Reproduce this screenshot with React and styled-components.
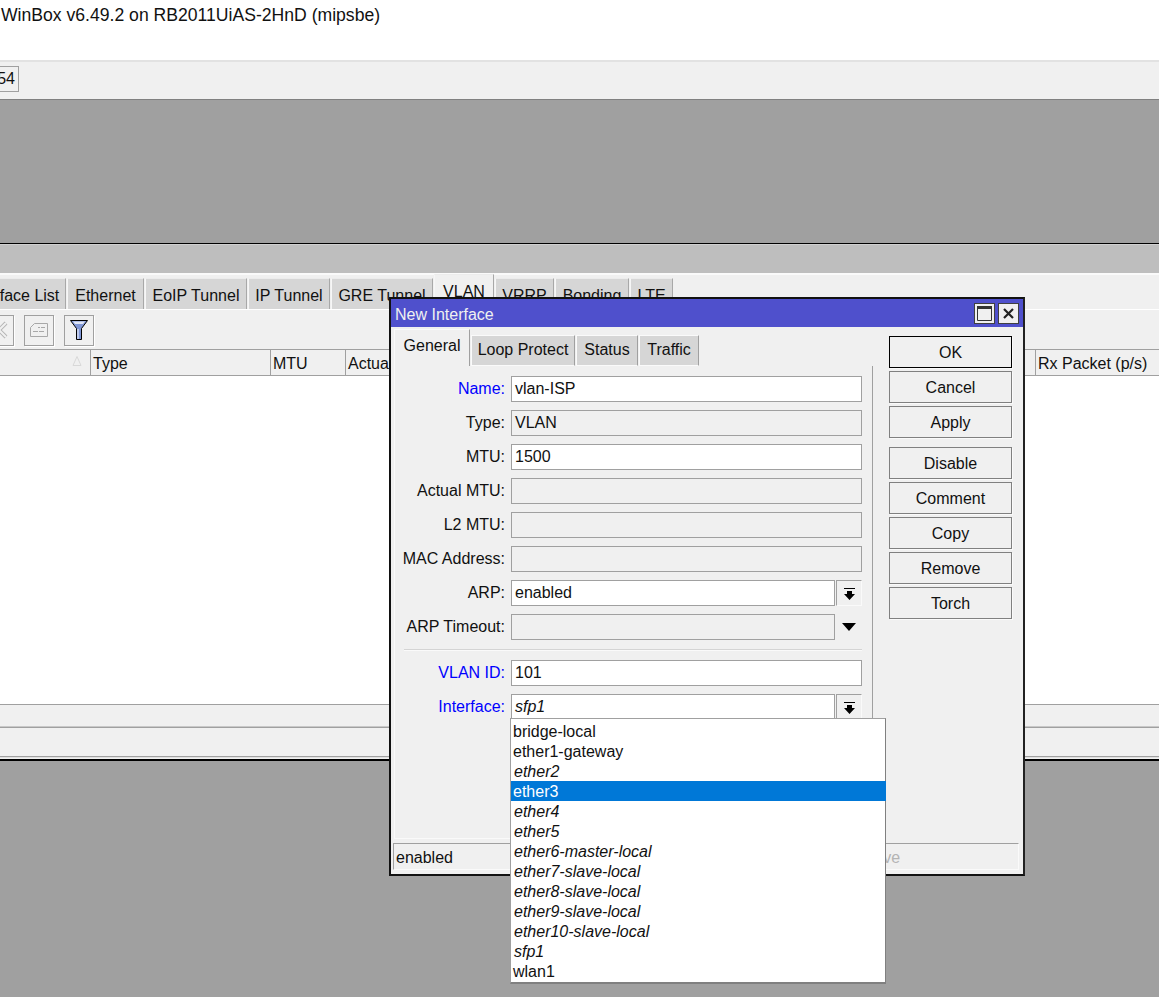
import React from 'react'
import styled, { createGlobalStyle } from 'styled-components'

const GlobalStyle = createGlobalStyle`
  html, body {
    margin: 0;
    padding: 0;
    background: #a0a0a0;
  }
  * {
    box-sizing: border-box;
  }
`

const Page = styled.div`
  position: relative;
  width: 1159px;
  height: 997px;
  overflow: hidden;
  display: flex;
  flex-direction: column;
  background: #a0a0a0;
  font-family: 'Liberation Sans', Arial, sans-serif;
  font-size: 16px;
  color: #111;
`

const AppTitle = styled.div`
  height: 62px;
  flex: none;
  padding: 5px 0 0 1px;
  background: #fff;
  font-size: 17.6px;
  line-height: 20px;
  white-space: nowrap;
  border-bottom: 2px solid #e2e2e2;
`

const TopBar = styled.div`
  height: 38px;
  flex: none;
  display: flex;
  align-items: flex-start;
  padding-top: 4px;
  background: #f0f0f0;
  border-bottom: 1px solid #808080;
`

const UptimeBox = styled.div`
  width: 19px;
  height: 26px;
  display: flex;
  align-items: center;
  justify-content: flex-end;
  padding-right: 3px;
  border: 1px solid #a0a0a0;
  border-left: none;
`

const Desktop = styled.div`
  height: 143px;
  flex: none;
  background: #a0a0a0;
`

const MainWindow = styled.div`
  height: 518px;
  flex: none;
  display: flex;
  flex-direction: column;
  background: #f0f0f0;
  border-top: 1px solid #000;
  border-bottom: 2px solid #000;
`

const WindowTitle = styled.div`
  height: 29px;
  flex: none;
  background: #bebebe;
  border-top: 1px solid #d0d0d0;
`

const TabRow = styled.div`
  height: 37px;
  flex: none;
  display: flex;
  align-items: flex-end;
  gap: 1px;
  margin-left: -39px;
  white-space: nowrap;
  border-bottom: 1px solid #fff;
  border-top: 2px solid #fafafa;
`

const MainTab = styled.div`
  width: ${(p) => p.$width}px;
  height: ${(p) => (p.$active ? 35 : 31)}px;
  flex: none;
  display: flex;
  align-items: center;
  justify-content: center;
  padding-top: ${(p) => (p.$active ? 0 : 3)}px;
  background: ${(p) => (p.$active ? '#f0f0f0' : '#d6d6d6')};
  border-top: 1px solid #ececec;
  border-left: 1px solid #f6f6f6;
  border-right: 1px solid #a8a8a8;
`

const ToolRow = styled.div`
  height: 39px;
  flex: none;
  display: flex;
  align-items: center;
  gap: 10px;
  margin-left: -16px;
  padding-top: 1px;
`

const ToolButton = styled.div`
  width: 30px;
  height: 31px;
  display: flex;
  align-items: center;
  justify-content: center;
  border: 1px solid #a0a0a0;
  box-shadow: 1px 1px 0 #fff;
`

const HeaderRow = styled.div`
  height: 27px;
  flex: none;
  display: flex;
  background: #f0f0f0;
  border-top: 1px solid #a0a0a0;
  border-bottom: 1px solid #a0a0a0;
  white-space: nowrap;
`

const HeaderCell = styled.div`
  position: relative;
  width: ${(p) => p.$width}px;
  flex: none;
  padding: 4px 0 0 2px;
  line-height: 20px;
  border-right: ${(p) => (p.$open ? 'none' : '1px solid #a0a0a0')};
`

const SortMark = styled.svg`
  position: absolute;
  top: 6px;
  right: 8px;
`

const ListBody = styled.div`
  height: 328px;
  flex: none;
  background: #fff;
`

const FootBar = styled.div`
  height: ${(p) => p.$height}px;
  flex: none;
  background: #f0f0f0;
  border-top: 1px solid #a0a0a0;
`

const FootGap = styled.div`
  height: 1px;
  flex: none;
  background: #c8c8c8;
`

const FootLine = styled.div`
  height: 2px;
  flex: none;
  margin-top: 2px;
  background: #a0a0a0;
  border-bottom: 1px solid #e0e0e0;
`

const Dialog = styled.div`
  position: absolute;
  left: 389px;
  top: 297px;
  width: 636px;
  height: 579px;
  display: flex;
  flex-direction: column;
  background: #f0f0f0;
  border: 2px solid #111;
  border-right-color: #222;
`

const DialogTitle = styled.div`
  height: 28px;
  flex: none;
  display: flex;
  align-items: center;
  padding: 0 4px 0 4px;
  background: #4f50cc;
  color: #f0f0f0;
`

const TitleText = styled.span`
  flex: 1;
  padding-top: 3px;
`

const TitleButton = styled.div`
  width: 21px;
  height: 21px;
  display: flex;
  align-items: center;
  justify-content: center;
  margin-left: 3px;
  background: #f0f0f0;
  border: 1px solid #404040;
`

const DialogMain = styled.div`
  flex: 1;
  min-height: 0;
  display: flex;
`

const FormSide = styled.div`
  width: 482px;
  flex: none;
  display: flex;
  flex-direction: column;
  padding-left: 3px;
`

const DialogTabs = styled.div`
  height: 39px;
  flex: none;
  display: flex;
  align-items: flex-end;
  gap: 1px;
  padding-top: 3px;
`

const DialogTab = styled.div`
  width: ${(p) => p.$width}px;
  height: ${(p) => (p.$active ? 37 : 31)}px;
  flex: none;
  display: flex;
  align-items: center;
  justify-content: center;
  padding-bottom: ${(p) => (p.$active ? 4 : 2)}px;
  background: ${(p) => (p.$active ? '#f0f0f0' : '#d6d6d6')};
  border-top: 1px solid #fafafa;
  border-left: 1px solid #fafafa;
  border-right: 1px solid #a0a0a0;
  border-bottom: ${(p) => (p.$active ? 'none' : '1px solid #fafafa')};
`

const Panel = styled.div`
  flex: 1;
  display: flex;
  flex-direction: column;
  gap: 8px;
  padding: 10px 10px 0 0;
  border-right: 1px solid #a0a0a0;
  border-left: 1px solid #fafafa;
  border-bottom: 1px solid #fafafa;
`

const FieldRow = styled.div`
  height: 26px;
  flex: none;
  display: flex;
  align-items: center;
`

const FieldLabel = styled.div`
  width: 110px;
  flex: none;
  margin-right: 6px;
  text-align: right;
  white-space: nowrap;
  color: ${(p) => (p.$required ? '#0000ff' : '#111')};
`

const Field = styled.div`
  flex: 1;
  height: 26px;
  min-width: 0;
  padding: 0 3px;
  line-height: 24px;
  background: ${(p) => (p.$readOnly ? '#f0f0f0' : '#fff')};
  border: 1px solid #a0a0a0;
  font-style: ${(p) => (p.$italic ? 'italic' : 'normal')};
`

const DropButton = styled.div`
  width: 26px;
  height: 26px;
  flex: none;
  display: flex;
  align-items: center;
  justify-content: center;
  margin-left: 1px;
  border: 1px solid #a0a0a0;
  border-right-color: #fafafa;
  border-bottom-color: #fafafa;
`

const OpenArrow = styled.div`
  width: 27px;
  height: 26px;
  flex: none;
  display: flex;
  align-items: center;
  justify-content: center;
`

const Divider = styled.div`
  height: 2px;
  flex: none;
  margin: 1px 0 1px 9px;
  background: #d4d4d4;
  border-bottom: 1px solid #fafafa;
`

const ButtonSide = styled.div`
  display: flex;
  flex-direction: column;
  gap: 3px;
  margin-left: 16px;
  padding-top: 9px;
`

const ActionButton = styled.div`
  width: 123px;
  height: 32px;
  flex: none;
  display: flex;
  align-items: center;
  justify-content: center;
  padding-top: 1px;
  margin-top: ${(p) => (p.$spaced ? 6 : 0)}px;
  border: 1px solid ${(p) => (p.$primary ? '#000' : '#808080')};
  box-shadow: 1px 1px 0 #fafafa;
`

const StatusBar = styled.div`
  height: 27px;
  flex: none;
  display: flex;
  margin: 4px 4px 4px 2px;
  border-top: 1px solid #a0a0a0;
  border-left: 1px solid #a0a0a0;
  border-right: 1px solid #fafafa;
  border-bottom: 1px solid #fafafa;
  line-height: 27px;
`

const StatusCell = styled.div`
  width: ${(p) => p.$width}px;
  padding-left: 2px;
  color: ${(p) => (p.$muted ? '#b4b4b4' : '#111')};
`

const DropList = styled.div`
  position: absolute;
  left: 510px;
  top: 718px;
  width: 376px;
  height: 266px;
  padding-top: 2px;
  background: #fff;
  border-top: 1px solid #a0a0a0;
  border-left: 1px solid #a0a0a0;
  border-right: 1px solid #808080;
  border-bottom: 2px solid #808080;
`

const DropItem = styled.div`
  height: 20px;
  margin-right: ${(p) => (p.$selected ? -1 : 0)}px;
  padding: 1px 0 0 ${(p) => (p.$italic ? 3 : 2)}px;
  line-height: 20px;
  white-space: nowrap;
  font-style: ${(p) => (p.$italic ? 'italic' : 'normal')};
  background: ${(p) => (p.$selected ? '#0078d7' : 'transparent')};
  color: ${(p) => (p.$selected ? '#fff' : '#111')};
`

const PullIcon = () => (
  <svg width="13" height="13" viewBox="0 0 13 13">
    <path d="M1 1h11v1H1z" fill="#000" />
    <path d="M4 4h5v3h3l-5.5 6L1 7h3z" fill="#000" />
  </svg>
)

const DownIcon = () => (
  <svg width="14" height="8" viewBox="0 0 14 8">
    <path d="M0 0h14L7 8z" fill="#000" />
  </svg>
)

const mainTabs = [
  { label: 'Interface List', width: 105 },
  { label: 'Ethernet', width: 77 },
  { label: 'EoIP Tunnel', width: 102 },
  { label: 'IP Tunnel', width: 82 },
  { label: 'GRE Tunnel', width: 102 },
  { label: 'VLAN', width: 60, active: true },
  { label: 'VRRP', width: 59 },
  { label: 'Bonding', width: 74 },
  { label: 'LTE', width: 43 },
]

const columns = [
  { label: '', width: 91, sorted: true },
  { label: 'Type', width: 180 },
  { label: 'MTU', width: 75 },
  { label: 'Actual MTU', width: 690 },
  { label: 'Rx Packet (p/s)', width: 124, open: true },
]

const dialogTabs = [
  { label: 'General', width: 76, active: true },
  { label: 'Loop Protect', width: 104 },
  { label: 'Status', width: 62 },
  { label: 'Traffic', width: 60 },
]

const interfaces = [
  { name: 'bridge-local' },
  { name: 'ether1-gateway' },
  { name: 'ether2', italic: true },
  { name: 'ether3', selected: true },
  { name: 'ether4', italic: true },
  { name: 'ether5', italic: true },
  { name: 'ether6-master-local', italic: true },
  { name: 'ether7-slave-local', italic: true },
  { name: 'ether8-slave-local', italic: true },
  { name: 'ether9-slave-local', italic: true },
  { name: 'ether10-slave-local', italic: true },
  { name: 'sfp1', italic: true },
  { name: 'wlan1' },
]

const App = () => {
  return (
    <Page>
      <GlobalStyle />
      <AppTitle>WinBox v6.49.2 on RB2011UiAS-2HnD (mipsbe)</AppTitle>
      <TopBar>
        <UptimeBox>54</UptimeBox>
      </TopBar>
      <Desktop />
      <MainWindow>
        <WindowTitle />
        <TabRow>
          {mainTabs.map((tab) => (
            <MainTab key={tab.label} $width={tab.width} $active={tab.active}>
              {tab.label}
            </MainTab>
          ))}
        </TabRow>
        <ToolRow>
          <ToolButton>
            <svg width="20" height="20" viewBox="0 0 20 20" fill="none">
              <path d="M3 3l14 14M17 3L3 17" stroke="#b4b4b4" strokeWidth="4" />
              <path d="M3 3l14 14M17 3L3 17" stroke="#f0f0f0" strokeWidth="2" />
            </svg>
          </ToolButton>
          <ToolButton>
            <svg width="20" height="16" viewBox="0 0 20 16" fill="none" stroke="#a8a8a8">
              <path d="M5.5 1.5h13v13h-17v-9zM9 5.5h2M12 5.5h4M4 9.5h5M10 9.5h5" />
            </svg>
          </ToolButton>
          <ToolButton>
            <svg width="20" height="24" viewBox="0 0 20 24">
              <path d="M1.5 2.5h17l-6 8v11h-5v-11z" fill="#7f96d6" stroke="#000" />
              <path d="M4 3.5h12l-2 2.500H6z" fill="#dfe5f5" />
              <path d="M8.500 11h1v10h-1z" fill="#fff" />
            </svg>
          </ToolButton>
        </ToolRow>
        <HeaderRow>
          {columns.map((col) => (
            <HeaderCell key={col.label} $width={col.width} $open={col.open}>
              {col.label}
              {col.sorted && (
                <SortMark width="10" height="10" viewBox="0 0 10 10" fill="none" stroke="#d8d8d8">
                  <path d="M5 0.5L9 9.5H1z" />
                </SortMark>
              )}
            </HeaderCell>
          ))}
        </HeaderRow>
        <ListBody />
        <FootBar $height={22} />
        <FootGap />
        <FootBar $height={27} />
        <FootLine />
      </MainWindow>

      <Dialog>
        <DialogTitle>
          <TitleText>New Interface</TitleText>
          <TitleButton>
            <svg width="15" height="15" viewBox="0 0 15 15" fill="none" stroke="#333">
              <path d="M.5 2.500h14v12H.5z" />
              <path d="M0 1.500h15" strokeWidth="3" />
            </svg>
          </TitleButton>
          <TitleButton>
            <svg width="11" height="11" viewBox="0 0 11 11" fill="none" stroke="#222" strokeWidth="2.200">
              <path d="M1 1l9 9M10 1l-9 9" />
            </svg>
          </TitleButton>
        </DialogTitle>
        <DialogMain>
          <FormSide>
            <DialogTabs>
              {dialogTabs.map((tab) => (
                <DialogTab key={tab.label} $width={tab.width} $active={tab.active}>
                  {tab.label}
                </DialogTab>
              ))}
            </DialogTabs>
            <Panel>
              <FieldRow>
                <FieldLabel $required>Name:</FieldLabel>
                <Field>vlan-ISP</Field>
              </FieldRow>
              <FieldRow>
                <FieldLabel>Type:</FieldLabel>
                <Field $readOnly>VLAN</Field>
              </FieldRow>
              <FieldRow>
                <FieldLabel>MTU:</FieldLabel>
                <Field>1500</Field>
              </FieldRow>
              <FieldRow>
                <FieldLabel>Actual MTU:</FieldLabel>
                <Field $readOnly />
              </FieldRow>
              <FieldRow>
                <FieldLabel>L2 MTU:</FieldLabel>
                <Field $readOnly />
              </FieldRow>
              <FieldRow>
                <FieldLabel>MAC Address:</FieldLabel>
                <Field $readOnly />
              </FieldRow>
              <FieldRow>
                <FieldLabel>ARP:</FieldLabel>
                <Field>enabled</Field>
                <DropButton>
                  <PullIcon />
                </DropButton>
              </FieldRow>
              <FieldRow>
                <FieldLabel>ARP Timeout:</FieldLabel>
                <Field $readOnly />
                <OpenArrow>
                  <DownIcon />
                </OpenArrow>
              </FieldRow>
              <Divider />
              <FieldRow>
                <FieldLabel $required>VLAN ID:</FieldLabel>
                <Field>101</Field>
              </FieldRow>
              <FieldRow>
                <FieldLabel $required>Interface:</FieldLabel>
                <Field $italic>sfp1</Field>
                <DropButton>
                  <PullIcon />
                </DropButton>
              </FieldRow>
            </Panel>
          </FormSide>
          <ButtonSide>
            <ActionButton $primary>OK</ActionButton>
            <ActionButton>Cancel</ActionButton>
            <ActionButton>Apply</ActionButton>
            <ActionButton $spaced>Disable</ActionButton>
            <ActionButton>Comment</ActionButton>
            <ActionButton>Copy</ActionButton>
            <ActionButton>Remove</ActionButton>
            <ActionButton>Torch</ActionButton>
          </ButtonSide>
        </DialogMain>
        <StatusBar>
          <StatusCell $width={213}>enabled</StatusCell>
          <StatusCell $width={251} />
          <StatusCell $muted>Slave</StatusCell>
        </StatusBar>
      </Dialog>

      <DropList>
        {interfaces.map((item) => (
          <DropItem key={item.name} $italic={item.italic} $selected={item.selected}>
            {item.name}
          </DropItem>
        ))}
      </DropList>
    </Page>
  )
}

export default App
